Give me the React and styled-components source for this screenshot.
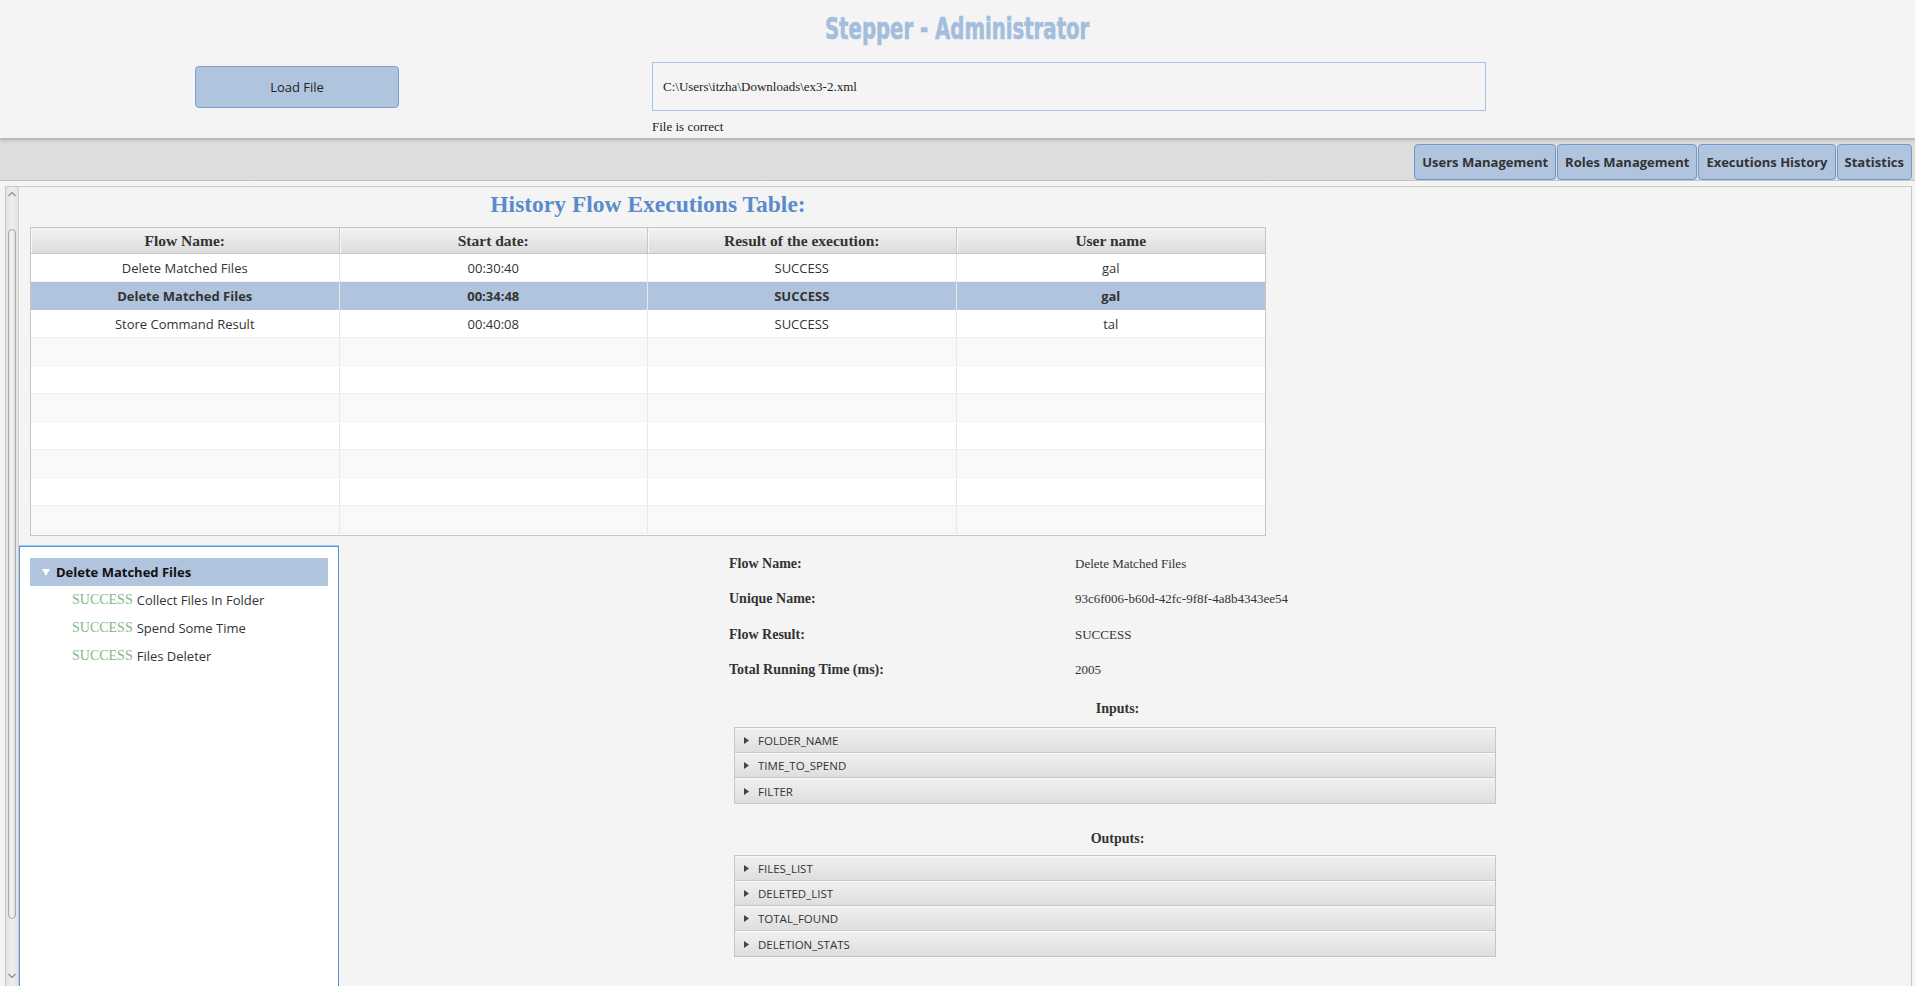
import React from 'react';
import styled, { createGlobalStyle } from 'styled-components';

const GlobalStyle = createGlobalStyle`
  html, body {
    margin: 0;
    padding: 0;
    background: #f4f4f4;
  }
  body {
    font-family: "Open Sans", "Noto Sans", sans-serif;
    color: #333333;
  }
`;

const Page = styled.div`
  width: 100%;
  height: 986px;
  overflow: hidden;
  display: flex;
  flex-direction: column;
  background: #f4f4f4;
`;

const Header = styled.header`
  height: 138px;
  box-sizing: border-box;
  padding-top: 9px;
  background: #f4f4f4;
  position: relative;
  z-index: 1;
  box-shadow: 0 2px 3px rgba(0, 0, 0, 0.18);
`;

const Title = styled.h1`
  margin: 0;
  height: 40px;
  line-height: 40px;
  text-align: center;
  font-family: "DejaVu Sans Condensed", "DejaVu Sans", sans-serif;
  font-weight: 700;
  font-size: 30px;
  color: #a3bddc;
  span {
    display: inline-block;
    transform: scaleX(0.73);
    -webkit-text-stroke: 0.6px #a3bddc;
  }
`;

const LoadRow = styled.div`
  display: flex;
  align-items: flex-start;
  margin-top: 13px;
  padding-left: 195px;
`;

const LoadButton = styled.button`
  width: 204px;
  height: 42px;
  margin-top: 4px;
  margin-right: 253px;
  box-sizing: border-box;
  background: #b0c4de;
  border: 1px solid #7c9fcf;
  border-radius: 4px;
  font-family: "Open Sans", sans-serif;
  font-size: 13px;
  color: #222;
  cursor: pointer;
`;

const PathColumn = styled.div`
  width: 834px;
  display: flex;
  flex-direction: column;
`;

const PathField = styled.div`
  height: 49px;
  box-sizing: border-box;
  border: 1px solid #a9c1e1;
  padding-left: 10px;
  display: flex;
  align-items: center;
  font-family: "Liberation Serif", serif;
  font-size: 13px;
  color: #222;
`;

const Status = styled.div`
  margin-top: 8px;
  line-height: 16px;
  font-family: "Liberation Serif", serif;
  font-size: 13px;
  color: #222;
`;

const TabBar = styled.nav`
  height: 43px;
  box-sizing: border-box;
  border-bottom: 1px solid #c4c4c4;
  background: linear-gradient(to bottom, #d6d6d6, #dedede 20%, #dddddd);
  display: flex;
  justify-content: flex-end;
  align-items: flex-end;
  padding-right: 3px;
`;

const Tab = styled.button`
  height: 36px;
  box-sizing: border-box;
  margin-left: 1px;
  padding: 0 7px;
  background: #b0c4de;
  border: 1px solid #6f98cc;
  border-radius: 4px;
  font-family: "Open Sans", sans-serif;
  font-weight: 700;
  font-size: 13px;
  color: #333;
  cursor: pointer;
`;

const Content = styled.main`
  flex: 1;
  min-height: 0;
  padding: 5px 3px 0 5px;
`;

const ScrollPane = styled.div`
  height: 100%;
  box-sizing: border-box;
  border: 1px solid #c8c8c8;
  border-bottom: none;
  display: flex;
`;

const ScrollBar = styled.div`
  width: 12px;
  flex-shrink: 0;
  border-right: 1px solid #cfcfcf;
  background: linear-gradient(to right, #e2e2e2, #efefef 50%, #e2e2e2);
  display: flex;
  flex-direction: column;
  align-items: center;
`;

const ScrollArrow = styled.svg`
  margin-top: ${(p) => p.$top || 0}px;
  width: 8px;
  height: 6px;
`;

const Thumb = styled.div`
  margin-top: 32px;
  width: 8px;
  height: 690px;
  box-sizing: border-box;
  border: 1px solid #a9a9a9;
  border-radius: 4px;
  background: linear-gradient(to right, #e6e6e6, #f4f4f4, #dcdcdc);
`;

const Inner = styled.div`
  flex: 1;
  min-width: 0;
  display: flex;
  flex-direction: column;
  padding-top: 3px;
`;

const TableBlock = styled.section`
  width: 1236px;
  margin-left: 11px;
`;

const TableTitle = styled.h2`
  margin: 0;
  height: 28px;
  line-height: 28px;
  text-align: center;
  font-family: "Liberation Serif", serif;
  font-weight: 700;
  font-size: 23.5px;
  color: #5b8bca;
`;

const Table = styled.div`
  margin-top: 9px;
  box-sizing: border-box;
  border: 1px solid #c6c6c6;
  padding-bottom: 1px;
  background: #fff;
`;

const HeadRow = styled.div`
  display: grid;
  grid-template-columns: repeat(4, 1fr);
  height: 26px;
  box-sizing: border-box;
  border-bottom: 1px solid #c6c6c6;
  background: linear-gradient(to bottom, #f3f3f3, #dcdcdc);
`;

const HeadCell = styled.div`
  display: flex;
  align-items: center;
  justify-content: center;
  border-right: 1px solid #c8c8c8;
  box-shadow: inset 1px 0 0 #f8f8f8;
  font-family: "Liberation Serif", serif;
  font-weight: 700;
  font-size: 15.5px;
  color: #333;
  &:last-child {
    border-right: none;
  }
`;

const Row = styled.div`
  display: grid;
  grid-template-columns: repeat(4, 1fr);
  height: 28px;
  background: ${(p) => (p.$selected ? '#b0c4de' : p.$odd ? '#f9f9f9' : '#ffffff')};
  box-shadow: inset 0 -1px 0 ${(p) => (p.$selected ? '#b0c4de' : '#f0f0f0')};
`;

const Cell = styled.div`
  display: flex;
  align-items: center;
  justify-content: center;
  border-right: 1px solid #e8e8e8;
  font-size: 13px;
  font-weight: ${(p) => (p.$bold ? 700 : 400)};
  color: #333;
  &:last-child {
    border-right: none;
  }
`;

const Lower = styled.div`
  flex: 1;
  min-height: 0;
  display: flex;
  margin-top: 10px;
`;

const Tree = styled.div`
  width: 320px;
  flex-shrink: 0;
  box-sizing: border-box;
  background: #fff;
  border: 1px solid #4f95d8;
  border-bottom: none;
  box-shadow: 0 -1px 0 #9ecbf0;
  padding: 11px 10px;
`;

const TreeItem = styled.div`
  height: 28px;
  display: flex;
  align-items: center;
  padding-left: ${(p) => (p.$root ? 12 : 42)}px;
  background: ${(p) => (p.$root ? '#b0c4de' : 'transparent')};
  font-size: 13px;
  font-weight: ${(p) => (p.$root ? 700 : 400)};
  color: ${(p) => (p.$root ? '#111' : '#333')};
`;

const Disclosure = styled.svg`
  width: 8px;
  height: 7px;
  margin-right: 6px;
`;

const Result = styled.span`
  font-family: "Liberation Serif", serif;
  font-size: 14px;
  color: #86b886;
  margin-right: 4px;
`;

const Details = styled.section`
  margin-left: 390px;
  width: 772px;
`;

const InfoGrid = styled.div`
  display: grid;
  grid-template-columns: 346px 1fr;
  grid-auto-rows: 35.5px;
  align-items: center;
`;

const InfoLabel = styled.div`
  font-family: "Liberation Serif", serif;
  font-weight: 700;
  font-size: 14px;
  color: #333;
`;

const InfoValue = styled.div`
  font-family: "Liberation Serif", serif;
  font-size: 13px;
  color: #333;
`;

const SectionLabel = styled.div`
  margin-left: 5px;
  margin-top: ${(p) => p.$top}px;
  height: 20px;
  line-height: 20px;
  text-align: center;
  font-family: "Liberation Serif", serif;
  font-weight: 700;
  font-size: 14px;
  color: #333;
`;

const Accordion = styled.div`
  margin-left: 5px;
  margin-top: ${(p) => p.$top || 8}px;
  width: 762px;
  box-sizing: border-box;
  border: 1px solid #c6c6c6;
`;

const Pane = styled.div`
  height: 25px;
  box-sizing: border-box;
  display: flex;
  align-items: center;
  padding-left: 9px;
  background: linear-gradient(to bottom, #f0f0f0, #dedede);
  border-top: 1px solid #f8f8f8;
  border-bottom: 1px solid #c9c9c9;
  font-size: 11.5px;
  color: #333;
  &:last-child {
    border-bottom: none;
  }
`;

const PaneArrow = styled.svg`
  width: 5px;
  height: 7px;
  margin-right: 9px;
`;

const tabs = ['Users Management', 'Roles Management', 'Executions History', 'Statistics'];

const executions = [
  { name: 'Delete Matched Files', start: '00:30:40', result: 'SUCCESS', user: 'gal' },
  { name: 'Delete Matched Files', start: '00:34:48', result: 'SUCCESS', user: 'gal' },
  { name: 'Store Command Result', start: '00:40:08', result: 'SUCCESS', user: 'tal' },
];

const steps = ['Collect Files In Folder', 'Spend Some Time', 'Files Deleter'];

const info = [
  ['Flow Name:', 'Delete Matched Files'],
  ['Unique Name:', '93c6f006-b60d-42fc-9f8f-4a8b4343ee54'],
  ['Flow Result:', 'SUCCESS'],
  ['Total Running Time (ms):', '2005'],
];

const inputs = ['FOLDER_NAME', 'TIME_TO_SPEND', 'FILTER'];
const outputs = ['FILES_LIST', 'DELETED_LIST', 'TOTAL_FOUND', 'DELETION_STATS'];

function ArrowRight() {
  return (
    <PaneArrow viewBox="0 0 5 7">
      <path d="M0 0 L5 3.5 L0 7 Z" fill="#444" />
    </PaneArrow>
  );
}

export default function App() {
  const rows = Array.from({ length: 10 }, (_, i) => executions[i] || null);

  return (
    <>
      <GlobalStyle />
      <Page>
        <Header>
          <Title><span>Stepper - Administrator</span></Title>
          <LoadRow>
            <LoadButton>Load File</LoadButton>
            <PathColumn>
              <PathField>{'C:\\Users\\itzha\\Downloads\\ex3-2.xml'}</PathField>
              <Status>File is correct</Status>
            </PathColumn>
          </LoadRow>
        </Header>

        <TabBar>
          {tabs.map((t) => (
            <Tab key={t}>{t}</Tab>
          ))}
        </TabBar>

        <Content>
          <ScrollPane>
            <ScrollBar>
              <ScrollArrow $top={4} viewBox="0 0 8 6">
                <path d="M0.5 5 L4 1.5 L7.5 5" fill="none" stroke="#8a8a8a" strokeWidth="1.2" />
              </ScrollArrow>
              <Thumb />
              <ScrollArrow $top={54} viewBox="0 0 8 6">
                <path d="M0.5 1 L4 4.5 L7.5 1" fill="none" stroke="#8a8a8a" strokeWidth="1.2" />
              </ScrollArrow>
            </ScrollBar>

            <Inner>
              <TableBlock>
                <TableTitle>History Flow Executions Table:</TableTitle>
                <Table>
                  <HeadRow>
                    <HeadCell>Flow Name:</HeadCell>
                    <HeadCell>Start date:</HeadCell>
                    <HeadCell>Result of the execution:</HeadCell>
                    <HeadCell>User name</HeadCell>
                  </HeadRow>
                  {rows.map((r, i) => {
                    const selected = i === 1;
                    return (
                      <Row key={i} $selected={selected} $odd={i % 2 === 1}>
                        <Cell $bold={selected}>{r ? r.name : ''}</Cell>
                        <Cell $bold={selected}>{r ? r.start : ''}</Cell>
                        <Cell $bold={selected}>{r ? r.result : ''}</Cell>
                        <Cell $bold={selected}>{r ? r.user : ''}</Cell>
                      </Row>
                    );
                  })}
                </Table>
              </TableBlock>

              <Lower>
                <Tree>
                  <TreeItem $root>
                    <Disclosure viewBox="0 0 8 7">
                      <path d="M0 0 L8 0 L4 7 Z" fill="#ffffff" />
                    </Disclosure>
                    Delete Matched Files
                  </TreeItem>
                  {steps.map((s) => (
                    <TreeItem key={s}>
                      <Result>SUCCESS</Result>
                      {s}
                    </TreeItem>
                  ))}
                </Tree>

                <Details>
                  <InfoGrid>
                    {info.map(([label, value]) => (
                      <React.Fragment key={label}>
                        <InfoLabel>{label}</InfoLabel>
                        <InfoValue>{value}</InfoValue>
                      </React.Fragment>
                    ))}
                  </InfoGrid>

                  <SectionLabel $top={11}>Inputs:</SectionLabel>
                  <Accordion>
                    {inputs.map((n) => (
                      <Pane key={n}>
                        <ArrowRight />
                        {n}
                      </Pane>
                    ))}
                  </Accordion>

                  <SectionLabel $top={25}>Outputs:</SectionLabel>
                  <Accordion $top={6}>
                    {outputs.map((n) => (
                      <Pane key={n}>
                        <ArrowRight />
                        {n}
                      </Pane>
                    ))}
                  </Accordion>
                </Details>
              </Lower>
            </Inner>
          </ScrollPane>
        </Content>
      </Page>
    </>
  );
}
